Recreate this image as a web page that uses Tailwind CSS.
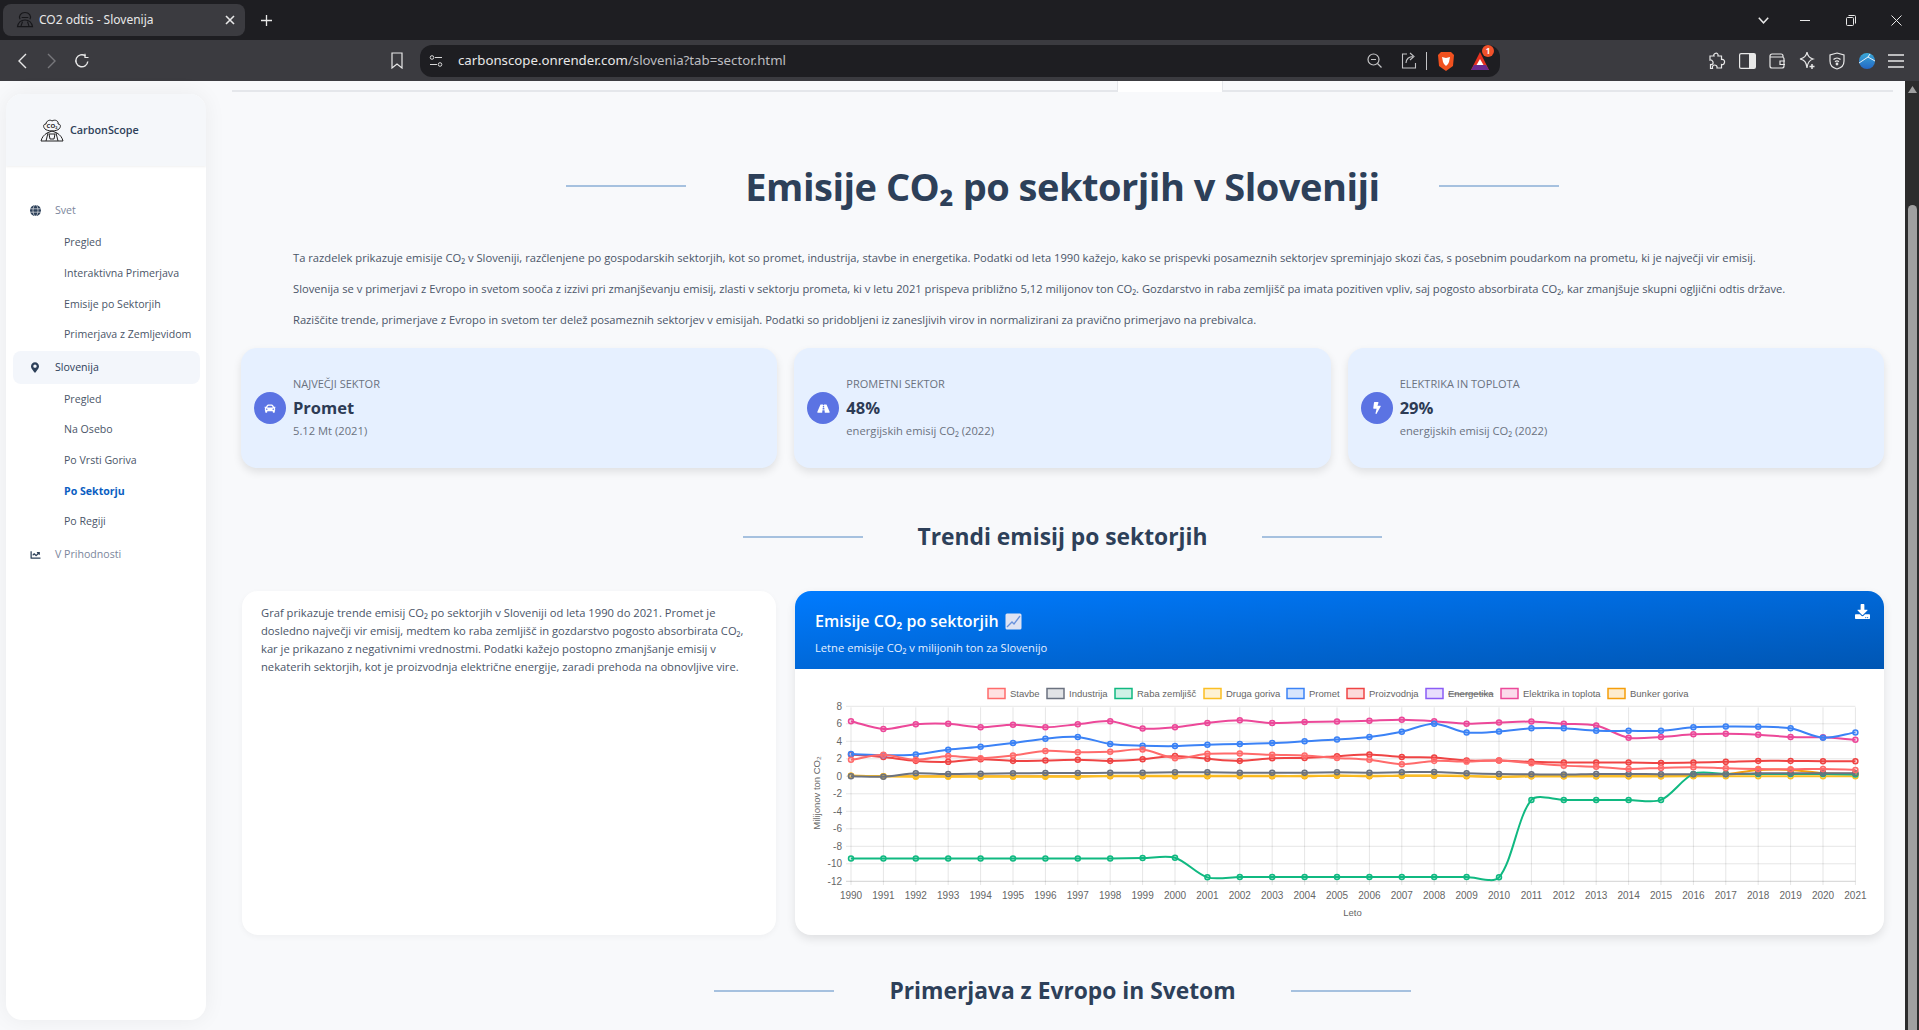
<!DOCTYPE html>
<html lang="sl">
<head>
<meta charset="utf-8">
<title>CO2 odtis - Slovenija</title>
<script src="https://cdn.jsdelivr.net/npm/@tailwindcss/browser@4"></script>
</head>
<body class="m-0 h-[1030px] w-[1919px] overflow-hidden bg-[#f8f9fb] font-['Open_Sans',sans-serif] text-[11.2px] text-[#4a5568]">

<!-- tab strip -->
<div class="flex h-10 items-start bg-[#1e1e22] text-[#e8e8e8]">
  <div class="ml-[3px] mt-1 flex h-8 w-[242px] items-center rounded-lg bg-[#3b3b40] pl-[12px] pr-[10px]">
    <svg class="h-5 w-5 text-[#17171a]" viewBox="0 0 24 24" fill="none" stroke="currentColor" stroke-width="1.4"><path d="M6 11c-2-4 1-8 6-8s8 4 6 8M3 20c1-5 4-8 9-8s8 3 9 8zM8 9h8M9 14l-2 6M15 14l2 6"/></svg>
    <span class="ml-[4px] font-['Noto_Sans',sans-serif] text-[12px]">CO2 odtis - Slovenija</span>
    <svg class="ml-auto h-[10px] w-[10px]" viewBox="0 0 10 10" stroke="#e8e8e8" stroke-width="1.6"><path d="M1 1l8 8M9 1l-8 8"/></svg>
  </div>
  <svg class="ml-[16px] mt-[15px] h-[11px] w-[11px]" viewBox="0 0 11 11" stroke="#e8e8e8" stroke-width="1.3"><path d="M5.5 0v11M0 5.5h11"/></svg>
  <div class="ml-auto flex h-10 items-center">
    <div class="flex w-[38px] justify-center"><svg class="h-[7px] w-[11px]" viewBox="0 0 11 7" fill="none" stroke="#e8e8e8" stroke-width="1.5"><path d="M.8.8l4.7 5 4.7-5"/></svg></div>
    <div class="flex w-[45px] justify-center"><div class="h-px w-[10px] bg-[#e8e8e8]"></div></div>
    <div class="flex w-[47px] justify-center"><svg class="h-[11px] w-[10px]" viewBox="0 0 10 11" fill="none" stroke="#e8e8e8"><rect x=".5" y="2.5" width="7" height="8" rx="1"/><path d="M2.5 .5h6a1 1 0 0 1 1 1v7"/></svg></div>
    <div class="flex w-[45px] justify-center"><svg class="h-[11px] w-[11px]" viewBox="0 0 11 11" stroke="#e8e8e8"><path d="M.5.5l10 10M10.5.5l-10 10"/></svg></div>
  </div>
</div>

<!-- toolbar -->
<div class="flex h-[41px] items-center bg-[#3b3b40] text-[#e8e8e8]">
  <div class="ml-[7px] flex w-[30px] justify-center"><svg class="h-4 w-[10px]" viewBox="0 0 10 16" fill="none" stroke="#e8e8e8" stroke-width="1.4"><path d="M9 1L2 8l7 7"/></svg></div>
  <div class="flex w-[29px] justify-center"><svg class="h-4 w-[10px]" viewBox="0 0 10 16" fill="none" stroke="#77777b" stroke-width="1.4"><path d="M1 1l7 7-7 7"/></svg></div>
  <div class="flex w-[31px] justify-center"><svg class="h-4 w-4" viewBox="0 0 16 16" fill="none" stroke="#e8e8e8" stroke-width="1.4"><path d="M13.8 8.5A6 6 0 1 1 11.5 3"/><path d="M11 .8v3.7h3.500" stroke-width="1.2"/></svg></div>
  <div class="ml-[285px] flex w-[30px] justify-center"><svg class="h-[17px] w-3" viewBox="0 0 12 17" fill="none" stroke="#e8e8e8" stroke-width="1.2"><path d="M1 1h10v15l-5-4-5 4z"/></svg></div>
  <div class="ml-[8px] flex h-8 w-[1080px] items-center rounded-xl bg-[#1e1e22] pl-[9px] pr-[11px]">
    <svg class="h-3 w-[14px]" viewBox="0 0 14 12" fill="none" stroke="#d8d8d8"><circle cx="3" cy="2.5" r="1.8"/><circle cx="11" cy="9.5" r="1.8"/><path d="M6 2.5h7M1 9.5h7"/></svg>
    <span class="ml-[15px] font-['Noto_Sans',sans-serif] text-[13.25px] text-[#e8e8e8]">carbonscope.onrender.com<span class="text-[#bdbdc0]">/slovenia?tab=sector.html</span></span>
    <svg class="ml-auto h-[15px] w-[15px]" viewBox="0 0 15 15" fill="none" stroke="#c4c4c6" stroke-width="1.2"><circle cx="6.5" cy="6.5" r="5.5"/><path d="M10.5 10.5l4 4M4 6.5h5"/></svg>
    <svg class="ml-[19px] h-[17px] w-[17px]" viewBox="0 0 17 17" fill="none" stroke="#c4c4c6" stroke-width="1.1"><path d="M6 2H1.500v14h13v-5M5 11c0-4 3-6.500 7-6.500M9 1l4 3.500L9 8"/></svg>
    <div class="ml-[8px] h-[18px] w-px bg-[#c4c4c6]"></div>
    <svg class="ml-[11px] h-[20px] w-[16px]" viewBox="0 0 16 20"><path d="M3 1h10l3 3-1 11-7 5-7-5L0 4z" fill="#f1511f"/><path d="M4 6l4 1 4-1-1 5-1 2-2 2-2-2-1-2z" fill="#fff"/></svg>
    <div class="relative ml-[17px] h-5 w-[18px]">
      <svg class="h-5 w-[18px]" viewBox="0 0 18 20"><path d="M9 1l9 18H0z" fill="#e8321f"/><path d="M0 19l3-5h12l3 5z" fill="#6a2c91"/><path d="M9 8l3.500 6h-7z" fill="#fff"/></svg>
      <div class="absolute right-[-5px] top-[-6px] flex h-3 w-3 items-center justify-center rounded-full bg-[#f1512a] text-[8px] font-bold text-white">1</div>
    </div>
  </div>
  <div class="ml-[202px] flex w-[30px] justify-center"><svg class="h-[18px] w-[17px]" viewBox="0 0 17 18" fill="none" stroke="#e8e8e8" stroke-width="1.2"><path d="M6 1.500c2-1 3.500.5 3 2.500h3.500v3.500c2-.5 3.500 1 3 3s-2 2.500-3 2v3.500H8c.5-2-1-3-2.500-3S3 14.500 3.500 16.500H1.500v-4c2 .5 3-1 2.500-2.500S2 7.500 1 8V4h4c-.5-1 0-2 1-2.500z"/></svg></div>
  <div class="flex w-[30px] justify-center"><svg class="h-4 w-[17px]" viewBox="0 0 17 16"><rect x=".6" y=".6" width="15.8" height="14.8" rx="1.5" fill="none" stroke="#e8e8e8" stroke-width="1.2"/><rect x="10" y="1" width="6" height="14" fill="#e8e8e8"/></svg></div>
  <div class="flex w-[30px] justify-center"><svg class="h-4 w-[17px]" viewBox="0 0 17 16" fill="none" stroke="#e8e8e8" stroke-width="1.2"><path d="M1 4V3a2 2 0 0 1 2-2h9a2 2 0 0 1 2 2v1M1 4v9a2 2 0 0 0 2 2h10a2 2 0 0 0 2-2V6a2 2 0 0 0-2-2zM16 8h-5v3.500h5"/></svg></div>
  <div class="flex w-[30px] justify-center"><svg class="h-[19px] w-4" viewBox="0 0 16 19" fill="none" stroke="#e8e8e8" stroke-width="1.2"><path d="M8 1c.6 4 2.500 6 6 7-3.500 1-5.400 3-6 9-.6-6-2.500-8-7-9 4.500-1 6.400-3 7-7z"/><path d="M13 13v5M10.500 15.500h5" stroke-width="1.5"/></svg></div>
  <div class="flex w-[30px] justify-center"><svg class="h-[18px] w-4" viewBox="0 0 16 18" fill="none" stroke="#e8e8e8" stroke-width="1.2"><path d="M8 1l7 2v6c0 4-3 7-7 8-4-1-7-4-7-8V3z"/><path d="M4.500 7.500c2-2 5-2 7 0M6 9.800c1.200-1 2.800-1 4 0"/><circle cx="8" cy="12" r=".8" fill="#e8e8e8"/></svg></div>
  <div class="flex w-[30px] justify-center"><svg class="h-4 w-4" viewBox="0 0 16 16"><defs><linearGradient id="gl" x1="0" y1="0" x2="0" y2="1"><stop offset="0" stop-color="#3aa9d8"/><stop offset="1" stop-color="#2467c4"/></linearGradient></defs><circle cx="8" cy="8" r="8" fill="url(#gl)"/><path d="M0 10l9-6 7 4M9 4l2-3" fill="none" stroke="#e9f4fb" stroke-width="1"/></svg></div>
  <div class="flex w-[28px] justify-center"><svg class="h-[14px] w-4" viewBox="0 0 16 14" stroke="#e8e8e8" stroke-width="1.3"><path d="M0 1h16M0 7h16M0 13h16"/></svg></div>
</div>

<div class="flex h-[949px]">
  <!-- sidebar -->
  <div class="w-[232px] shrink-0 pl-[6px] pt-[13px]">
    <aside class="h-[926px] w-[200px] overflow-hidden rounded-2xl bg-white shadow-[0_0_22px_rgba(0,0,0,0.06)]">
      <div class="flex h-[72px] items-center bg-[#f5f7fa] pl-[34px] shadow-[0_1px_2px_rgba(0,0,0,0.06)]">
        <svg class="h-6 w-6" viewBox="0 0 24 24" fill="none" stroke="#222" stroke-width="1"><path d="M5 11C3 9 3 6 6 6c0-3 4-5 6-3 3-2 7 0 6 3 3 0 3 3 1 5-1 1-4 2-7 2s-6-1-7-2z"/><path d="M1 23c1-4 3-6 6-8l5-2 5 2c3 2 5 4 6 8zM8 15l-2 8M16 15l2 8M9 16h6l-1 5h-4z"/><text x="12" y="10" text-anchor="middle" font-size="6" font-weight="700" fill="#222" stroke="none" font-family="Open Sans">CO₂</text></svg>
        <span class="ml-[6px] text-[10.8px] font-semibold text-[#2d4059]">CarbonScope</span>
      </div>
      <nav class="pt-[27px] text-[10.6px]">
        <div class="flex h-[35px] items-center pl-[24px] text-[#7b869c]">
          <svg class="h-[11px] w-[11px]" viewBox="0 0 11 11"><circle cx="5.5" cy="5.5" r="5.5" fill="#2d4059"/><path d="M0 3.800h11M0 7.200h11" stroke="#fff" stroke-width=".6"/><ellipse cx="5.5" cy="5.5" rx="2.5" ry="5.5" fill="none" stroke="#fff" stroke-width=".6"/></svg>
          <span class="ml-[14px]">Svet</span>
        </div>
        <div class="flex h-[30.6px] items-center pl-[58px] text-[#4a5568]">Pregled</div>
        <div class="flex h-[30.6px] items-center pl-[58px] text-[#4a5568]">Interaktivna Primerjava</div>
        <div class="flex h-[30.6px] items-center pl-[58px] text-[#4a5568]">Emisije po Sektorjih</div>
        <div class="flex h-[30.6px] items-center pl-[58px] text-[#4a5568]">Primerjava z Zemljevidom</div>
        <div class="ml-[7px] mt-[1px] flex h-[33px] w-[187px] items-center rounded-lg bg-[#f3f6fb] pl-[18px] text-[#2d4059]">
          <svg class="h-[11px] w-2" viewBox="0 0 384 512" fill="#2d4059"><path d="M172.268 501.67C26.97 291.031 0 268.413 0 192 0 85.961 85.961 0 192 0s192 85.961 192 192c0 76.413-26.97 99.031-172.268 309.67-9.535 13.774-29.93 13.773-39.464 0zM192 272c44.183 0 80-35.817 80-80s-35.817-80-80-80-80 35.817-80 80 35.817 80 80 80z"/></svg>
          <span class="ml-[16px]">Slovenija</span>
        </div>
        <div class="flex h-[30.6px] items-center pl-[58px] text-[#4a5568]">Pregled</div>
        <div class="flex h-[30.6px] items-center pl-[58px] text-[#4a5568]">Na Osebo</div>
        <div class="flex h-[30.6px] items-center pl-[58px] text-[#4a5568]">Po Vrsti Goriva</div>
        <div class="flex h-[30.6px] items-center pl-[58px] font-bold text-[#0b5ec2]">Po Sektorju</div>
        <div class="flex h-[30.6px] items-center pl-[58px] text-[#4a5568]">Po Regiji</div>
        <div class="mt-[1px] flex h-[33px] items-center pl-[24px] text-[#7b869c]">
          <svg class="h-[10px] w-[11px]" viewBox="0 0 512 512" fill="#2d4059"><path d="M496 384H64V80c0-8.840-7.160-16-16-16H16C7.160 64 0 71.160 0 80v336c0 17.670 14.330 32 32 32h464c8.840 0 16-7.160 16-16v-32c0-8.840-7.160-16-16-16zM464 96H345.940c-21.380 0-32.090 25.850-16.970 40.970l32.400 32.400L288 242.750l-73.370-73.370c-12.500-12.500-32.760-12.500-45.250 0l-68.690 68.690c-6.250 6.250-6.250 16.380 0 22.630l22.620 22.620c6.250 6.250 16.380 6.250 22.630 0L192 237.250l73.370 73.370c12.500 12.500 32.760 12.500 45.250 0l96-96 32.400 32.400c15.120 15.120 40.970 4.410 40.970-16.970V112c.01-8.840-7.150-16-15.990-16z"/></svg>
          <span class="ml-[14px]">V Prihodnosti</span>
        </div>
      </nav>
    </aside>
  </div>

  <!-- main -->
  <main class="w-[1673px] overflow-hidden pr-[12px]">
    <div class="flex h-[11px] border-b-2 border-[#e5e7eb]">
      <div class="ml-[885px] h-[11px] w-[106px] border-x border-[#e5e7eb] bg-white"></div>
    </div>

    <div class="mt-[64px] flex h-[60px] items-center justify-center gap-[59px]">
      <div class="h-0.5 w-[120px] bg-[#a6c1df]"></div>
      <h1 class="text-[38px] font-bold tracking-[-0.5px] text-[#2d4059]">Emisije CO₂ po sektorjih v Sloveniji</h1>
      <div class="h-0.5 w-[120px] bg-[#a6c1df]"></div>
    </div>

    <div class="mt-[32px] pl-[61px] text-[11.2px] leading-[20px] text-[#4a5568]">
      <p class="mb-[11px]">Ta razdelek prikazuje emisije CO₂ v Sloveniji, razčlenjene po gospodarskih sektorjih, kot so promet, industrija, stavbe in energetika. Podatki od leta 1990 kažejo, kako se prispevki posameznih sektorjev spreminjajo skozi čas, s posebnim poudarkom na prometu, ki je največji vir emisij.</p>
      <p class="mb-[11px]">Slovenija se v primerjavi z Evropo in svetom sooča z izzivi pri zmanjševanju emisij, zlasti v sektorju prometa, ki v letu 2021 prispeva približno 5,12 milijonov ton CO₂. Gozdarstvo in raba zemljišč pa imata pozitiven vpliv, saj pogosto absorbirata CO₂, kar zmanjšuje skupni ogljični odtis države.</p>
      <p>Raziščite trende, primerjave z Evropo in svetom ter delež posameznih sektorjev v emisijah. Podatki so pridobljeni iz zanesljivih virov in normalizirani za pravično primerjavo na prebivalca.</p>
    </div>

    <div class="mt-[18px] grid grid-cols-3 gap-[17px] px-[9px]">
      <div class="flex h-[120px] items-center rounded-2xl bg-[#e6f0ff] pl-[13px] shadow-[0_4px_8px_rgba(0,0,0,0.1)]">
        <div class="flex h-8 w-8 items-center justify-center rounded-full bg-[#5b73e3]"><svg class="h-[11px] w-3" viewBox="0 0 512 512" fill="#fff"><path d="M499.990 176h-59.870l-16.640-41.600C406.380 91.630 365.570 64 319.500 64h-127c-46.060 0-86.880 27.630-103.990 70.400L71.870 176H12.010C4.200 176-1.530 183.340.37 190.910l6 24C7.700 220.250 12.500 224 18.010 224h20.070C24.650 235.730 16 252.780 16 272v48c0 16.120 6.160 30.670 16 41.930V416c0 17.670 14.330 32 32 32h32c17.670 0 32-14.330 32-32v-32h256v32c0 17.670 14.330 32 32 32h32c17.670 0 32-14.330 32-32v-54.070c9.840-11.250 16-25.800 16-41.930v-48c0-19.220-8.650-36.270-22.070-48H494c5.510 0 10.310-3.750 11.640-9.090l6-24c1.890-7.570-3.840-14.910-11.650-14.910zm-352.060-17.830c7.290-18.220 24.940-30.170 44.570-30.170h127c19.630 0 37.280 11.950 44.570 30.170L384 208H128l19.930-49.830zM96 319.800c-19.200 0-32-12.760-32-31.900S76.800 256 96 256s48 28.710 48 47.850-28.800 15.950-48 15.950zm320 0c-19.200 0-48 3.190-48-15.950S396.800 256 416 256s32 12.760 32 31.900-12.800 31.900-32 31.900z"/></svg></div>
        <div class="ml-[7px]">
          <div class="text-[11px] leading-[16px] text-[#6b7280]">NAJVEČJI SEKTOR</div>
          <div class="mt-[3px] text-[16.5px] font-bold leading-[25px] text-[#2d3b55]">Promet</div>
          <div class="mt-[2px] text-[11.2px] leading-[18px] text-[#6b7280]">5.12 Mt (2021)</div>
        </div>
      </div>
      <div class="flex h-[120px] items-center rounded-2xl bg-[#e6f0ff] pl-[13px] shadow-[0_4px_8px_rgba(0,0,0,0.1)]">
        <div class="flex h-8 w-8 items-center justify-center rounded-full bg-[#5b73e3]"><svg class="h-[11px] w-[13px]" viewBox="0 0 576 512" fill="#fff"><path d="M573.190 402.670l-139.790-320C428.430 71.290 417.600 64 405.680 64h-97.590l2.450 23.160c.5 4.720-3.210 8.840-7.960 8.840h-29.160c-4.750 0-8.460-4.120-7.960-8.840L267.910 64h-97.590c-11.930 0-22.760 7.290-27.730 18.670L2.800 402.670C-6.450 423.860 8.310 448 30.540 448h196.840l10.310-97.680C238.410 342.250 245.210 336 253.330 336h69.340c8.120 0 14.920 6.250 15.640 14.320L348.620 448h196.840c22.230 0 36.990-24.140 27.730-45.330zM260.400 135.160a8 8 0 0 1 7.960-7.160h39.290c4.090 0 7.530 3.090 7.960 7.160l4.600 43.580c.75 7.090-4.810 13.260-11.930 13.260h-40.540c-7.130 0-12.680-6.170-11.930-13.260l4.590-43.580zM315.640 304h-55.290c-9.500 0-16.910-8.230-15.910-17.680l5.070-48c.86-8.140 7.720-14.320 15.910-14.320h45.150c8.190 0 15.050 6.180 15.910 14.320l5.070 48c1 9.450-6.410 17.680-15.910 17.680z"/></svg></div>
        <div class="ml-[7px]">
          <div class="text-[11px] leading-[16px] text-[#6b7280]">PROMETNI SEKTOR</div>
          <div class="mt-[3px] text-[16.5px] font-bold leading-[25px] text-[#2d3b55]">48%</div>
          <div class="mt-[2px] text-[11.2px] leading-[18px] text-[#6b7280]">energijskih emisij CO₂ (2022)</div>
        </div>
      </div>
      <div class="flex h-[120px] items-center rounded-2xl bg-[#e6f0ff] pl-[13px] shadow-[0_4px_8px_rgba(0,0,0,0.1)]">
        <div class="flex h-8 w-8 items-center justify-center rounded-full bg-[#5b73e3]"><svg class="h-3 w-2" viewBox="0 0 320 512" fill="#fff"><path d="M296 160H180.600l42.600-129.800C227.200 15 215.700 0 200 0H56C44 0 33.800 8.900 32.200 20.800l-32 240C-1.700 275.200 9.500 288 24 288h118.700L96.600 482.500c-3.600 15.200 8 29.500 23.300 29.500 8.400 0 16.400-4.400 20.800-12l176-304c9.300-15.900-2.200-36-20.700-36z"/></svg></div>
        <div class="ml-[7px]">
          <div class="text-[11px] leading-[16px] text-[#6b7280]">ELEKTRIKA IN TOPLOTA</div>
          <div class="mt-[3px] text-[16.5px] font-bold leading-[25px] text-[#2d3b55]">29%</div>
          <div class="mt-[2px] text-[11.2px] leading-[18px] text-[#6b7280]">energijskih emisij CO₂ (2022)</div>
        </div>
      </div>
    </div>

    <div class="mt-[49px] flex h-10 items-center justify-center gap-[55px]">
      <div class="h-0.5 w-[120px] bg-[#a6c1df]"></div>
      <h2 class="text-[22.8px] font-bold text-[#2d4059]">Trendi emisij po sektorjih</h2>
      <div class="h-0.5 w-[120px] bg-[#a6c1df]"></div>
    </div>

    <div class="mt-[34px] flex h-[344px] gap-[19px] pl-[10px] pr-[9px]">
      <div class="w-[534px] shrink-0 rounded-2xl bg-white px-[19px] pt-[13px] text-[11.2px] leading-[18px] text-[#4a5568] shadow-[0_2px_6px_rgba(0,0,0,0.04)]">Graf prikazuje trende emisij CO₂ po sektorjih v Sloveniji od leta 1990 do 2021. Promet je dosledno največji vir emisij, medtem ko raba zemljišč in gozdarstvo pogosto absorbirata CO₂, kar je prikazano z negativnimi vrednostmi. Podatki kažejo postopno zmanjšanje emisij v nekaterih sektorjih, kot je proizvodnja električne energije, zaradi prehoda na obnovljive vire.</div>
      <div class="w-[1089px] shrink-0 overflow-hidden rounded-2xl bg-white shadow-[0_4px_10px_rgba(0,0,0,0.1)]">
        <div class="relative h-[78px] bg-gradient-to-br from-[#007bff] to-[#0056b3] pl-5 pt-[17px] text-white">
          <div class="flex items-center text-[16px] font-semibold leading-[26px]">Emisije CO₂ po sektorjih
            <svg class="ml-[6px] h-[17px] w-[17px]" viewBox="0 0 17 17"><rect x=".5" y=".5" width="16" height="16" rx="1.5" fill="#dfe3f3"/><path d="M2 14L7 9l2 2 6-8" fill="none" stroke="#6a92dc" stroke-width="1.3"/></svg>
          </div>
          <div class="mt-[5px] text-[11.2px] leading-[18px] text-[#e6f0ff]">Letne emisije CO₂ v milijonih ton za Slovenijo</div>
          <svg class="absolute right-[14px] top-[13px] h-[15px] w-[15px]" viewBox="0 0 512 512" fill="#fff"><path d="M216 0h80c13.300 0 24 10.700 24 24v168h87.700c17.800 0 26.700 21.500 14.100 34.100L269.700 378.300c-7.500 7.500-19.800 7.500-27.300 0L90.100 226.100c-12.600-12.600-3.700-34.100 14.100-34.100H192V24c0-13.300 10.700-24 24-24zm296 376v112c0 13.300-10.700 24-24 24H24c-13.300 0-24-10.700-24-24V376c0-13.300 10.700-24 24-24h146.700l49 49c20.100 20.100 52.500 20.100 72.600 0l49-49H488c13.300 0 24 10.700 24 24zm-124 88c0-11-9-20-20-20s-20 9-20 20 9 20 20 20 20-9 20-20zm64 0c0-11-9-20-20-20s-20 9-20 20 9 20 20 20 20-9 20-20z"/></svg>
        </div>
        <svg id="chart" class="block" width="1089" height="266" viewBox="795 669 1089 266" font-family="Liberation Sans" font-size="10" fill="#666"></svg>
      </div>
    </div>

    <div class="mt-[36px] flex h-10 items-center justify-center gap-[55px]">
      <div class="h-0.5 w-[120px] bg-[#a6c1df]"></div>
      <h2 class="text-[22.8px] font-bold text-[#2d4059]">Primerjava z Evropo in Svetom</h2>
      <div class="h-0.5 w-[120px] bg-[#a6c1df]"></div>
    </div>
  </main>

  <!-- scrollbar -->
  <div class="relative w-[14px] shrink-0 bg-[#2c2c2c]">
    <svg class="absolute left-[3px] top-[5px] h-[7px] w-[9px]" viewBox="0 0 9 7"><path d="M4.5 0L9 7H0z" fill="#a0a0a0"/></svg>
    <div class="absolute bottom-0 left-[3px] top-[124px] w-[9px] rounded-t-full bg-[#a0a0a0]"></div>
  </div>
</div>

<script>
(function () {
  var x = function (i) { return 851 + 32.4 * i; };
  var y = function (v) { return 776.3 - 8.75 * v; };
  var g = [];
  for (var i = 0; i <= 31; i++) {
    g.push('<line x1="' + x(i) + '" x2="' + x(i) + '" y1="707.3" y2="885" stroke="rgba(0,0,0,.1)"/>');
    g.push('<text x="' + x(i) + '" y="899" text-anchor="middle">' + (1990 + i) + '</text>');
  }
  for (var v = 8; v >= -12; v -= 2) {
    g.push('<line x1="846" x2="1855.4" y1="' + y(v) + '" y2="' + y(v) + '" stroke="' + (v === -12 ? 'rgba(0,0,0,.18)' : 'rgba(0,0,0,.1)') + '"/>');
    g.push('<text x="842" y="' + (y(v) + 3.5) + '" text-anchor="end">' + v + '</text>');
  }
  g.push('<text transform="translate(820 793) rotate(-90)" text-anchor="middle" font-size="9.5">Milijonov ton CO₂</text>');
  g.push('<text x="1352.5" y="916" text-anchor="middle" font-size="9.5">Leto</text>');

  var S = [
    ['#f59e0b',[.05,0,0,0,0,0,0,0,0,0,0,0,0,0,0,.05,0,.05,.05,0,-.05,0,0,0,0,0,.05,.25,.73,.73,.35,.3]],
    ['#ec4899',[6.3,5.4,5.95,6,5.6,5.9,5.6,5.95,6.3,5.45,5.6,6.1,6.4,6.1,6.2,6.25,6.36,6.47,6.3,6,6.15,6.25,6,5.8,4.4,4.5,4.8,4.87,4.75,4.5,4.45,4.18]],
    ['#ef4444',[2.5,2.2,1.76,1.65,1.95,1.76,1.8,1.88,1.76,1.95,2.33,2,1.76,2.07,2.1,2.3,2.5,2.2,2.15,1.8,1.8,1.65,1.57,1.57,1.57,1.53,1.57,1.65,1.76,1.76,1.72,1.72]],
    ['#3b82f6',[2.55,2.4,2.5,3.03,3.37,3.8,4.3,4.5,3.7,3.5,3.45,3.6,3.7,3.8,4,4.2,4.5,5.1,6,5,5.13,5.48,5.48,5.2,5.2,5.2,5.6,5.7,5.67,5.48,4.4,5.02]],
    ['#fbbf24',[.05,0,-.05,-.05,-.05,-.05,-.05,-.05,.05,.05,.05,.05,.05,.05,.05,.1,.05,.1,.1,.05,-.05,0,0,0,0,0,0,0,0,0,0,0]],
    ['#10b981',[-9.4,-9.4,-9.4,-9.4,-9.4,-9.4,-9.4,-9.4,-9.4,-9.35,-9.3,-11.55,-11.5,-11.5,-11.5,-11.5,-11.5,-11.5,-11.5,-11.5,-11.55,-2.7,-2.7,-2.7,-2.7,-2.7,.27,.25,.25,.25,.25,.2]],
    ['#6b7280',[0,-.05,.35,.25,.3,.35,.37,.37,.4,.4,.45,.45,.4,.4,.42,.45,.42,.47,.5,.35,.27,.23,.2,.27,.27,.23,.23,.23,.35,.35,.35,.35]],
    ['#ff6b6b',[1.88,2.45,1.88,2.33,2.07,2.38,2.9,2.76,2.8,3.06,2.07,2.57,2.6,2.45,2.38,2.1,1.88,1.38,1.76,1.68,1.8,1.5,1.22,1.1,.84,.96,1.03,.92,.84,.8,.84,.73]]
  ];
  var legend = [['#ff6b6b','Stavbe',988],['#6b7280','Industrija',1047],['#10b981','Raba zemljišč',1115],['#fbbf24','Druga goriva',1204],['#3b82f6','Promet',1287],['#ef4444','Proizvodnja',1347],['#8b5cf6','Energetika',1426],['#ec4899','Elektrika in toplota',1501],['#f59e0b','Bunker goriva',1608]];
  legend.forEach(function (l) {
    g.push('<rect x="' + l[2] + '" y="688.5" width="17" height="10" fill="' + l[0] + '" fill-opacity=".2" stroke="' + l[0] + '" stroke-width="1.5"/>');
    g.push('<text x="' + (l[2] + 22) + '" y="697" font-size="9.5"' + (l[1] === 'Energetika' ? ' text-decoration="line-through"' : '') + '>' + l[1] + '</text>');
  });

  S.forEach(function (s) {
    var p = s[1].map(function (v, i) { return [x(i), y(v)]; });
    var cp = p.map(function (c, i) {
      var a = p[Math.max(i - 1, 0)], b = p[Math.min(i + 1, 31)];
      var d1 = Math.hypot(c[0] - a[0], c[1] - a[1]), d2 = Math.hypot(b[0] - c[0], b[1] - c[1]);
      var f1 = .3 * (d1 / (d1 + d2)), f2 = .3 * (d2 / (d1 + d2));
      return [[c[0] - f1 * (b[0] - a[0]), c[1] - f1 * (b[1] - a[1])], [c[0] + f2 * (b[0] - a[0]), c[1] + f2 * (b[1] - a[1])]];
    });
    var d = 'M' + p[0].join(' ');
    for (var i = 1; i < 32; i++) d += 'C' + cp[i - 1][1].join(' ') + ' ' + cp[i][0].join(' ') + ' ' + p[i].join(' ');
    g.push('<path d="' + d + '" fill="none" stroke="' + s[0] + '" stroke-width="2"/>');
    p.forEach(function (c) {
      g.push('<circle cx="' + c[0] + '" cy="' + c[1] + '" r="2.5" fill="' + s[0] + '" fill-opacity=".2" stroke="' + s[0] + '" stroke-width="1.5"/>');
    });
  });
  document.getElementById('chart').innerHTML = g.join('');
})();
</script>
</body>
</html>
